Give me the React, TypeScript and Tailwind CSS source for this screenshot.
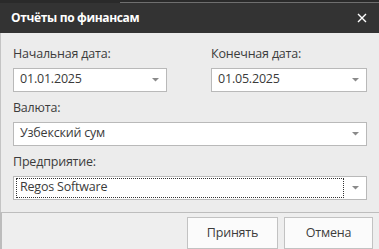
function Caret() {
  return (
    <svg width="7" height="4" viewBox="0 0 7 4" className="shrink-0">
      <path d="M0 0h7L3.5 3.5z" fill="#8a8a8a" />
    </svg>
  );
}

function Field({ value, focused, className }: { value: string; focused?: boolean; className?: string }) {
  return (
    <div
      className={`h-[24px] bg-white border border-[#b9b9b9] flex items-center pr-[7px] ${className ?? ""}`}
    >
      <div
        className={`flex-1 h-[20px] ml-[2px] mr-[8px] flex items-center pl-[3px] text-[12.5px] tracking-[-0.2px] text-[#3a3a3a] ${
          focused ? "border border-dotted border-[#333]" : "border border-transparent"
        }`}
      >
        {value}
      </div>
      <Caret />
    </div>
  );
}

export default function App() {
  return (
    <div className="w-[379px] h-[249px] bg-[#ececec] overflow-hidden flex flex-col font-['Open_Sans','Noto_Sans',sans-serif]">
      <div className="h-[3px] bg-[#2a2a2a] flex flex-col justify-end">
        <div className="h-[1px] ml-[120px] bg-[#6f6f6f]" />
      </div>
      <div className="h-[30px] bg-[#333333] flex items-center justify-between pl-[11px] pr-[12px]">
        <span className="text-white text-[12px] font-bold tracking-[-0.35px]">Отчёты по финансам</span>
        <svg width="10" height="10" viewBox="0 0 10 10">
          <path d="M1 1l8 8M9 1l-8 8" stroke="#ffffff" strokeWidth="1.4" />
        </svg>
      </div>
      <div className="h-[181px] border-l border-[#c4c4c4] pl-[12px] pr-[12px] pt-[12px] text-[#3c3c3c]">
        <div className="flex gap-[44px]">
          <div className="w-[154px]">
            <div className="text-[12.5px] tracking-[-0.2px] leading-[18px]">Начальная дата:</div>
            <Field value="01.01.2025" className="mt-[5px]" />
          </div>
          <div className="flex-1">
            <div className="text-[12.5px] tracking-[-0.2px] leading-[18px]">Конечная дата:</div>
            <Field value="01.05.2025" className="mt-[5px]" />
          </div>
        </div>
        <div className="text-[12.5px] tracking-[-0.2px] leading-[18px] mt-[7px]">Валюта:</div>
        <Field value="Узбекский сум" className="mt-[5px]" />
        <div className="text-[12.5px] tracking-[-0.2px] leading-[18px] mt-[7px]">Предприятие:</div>
        <Field value="Regos Software" focused className="mt-[5px]" />
      </div>
      <div className="h-[1px] bg-[#bdbdbd]" />
      <div className="flex-1 border-l-2 border-[#bcbcbc] bg-[#eeeeee] flex justify-end gap-[6px] pt-[4px] pr-[6px]">
        <button className="w-[91px] h-[32px] bg-[#fbfbfb] border border-[#c2c2c2] text-[12.5px] tracking-[-0.2px] text-[#3c3c3c]">
          Принять
        </button>
        <button className="w-[89px] h-[32px] bg-[#fbfbfb] border border-[#c2c2c2] text-[12.5px] tracking-[-0.2px] text-[#3c3c3c]">
          Отмена
        </button>
      </div>
    </div>
  );
}
